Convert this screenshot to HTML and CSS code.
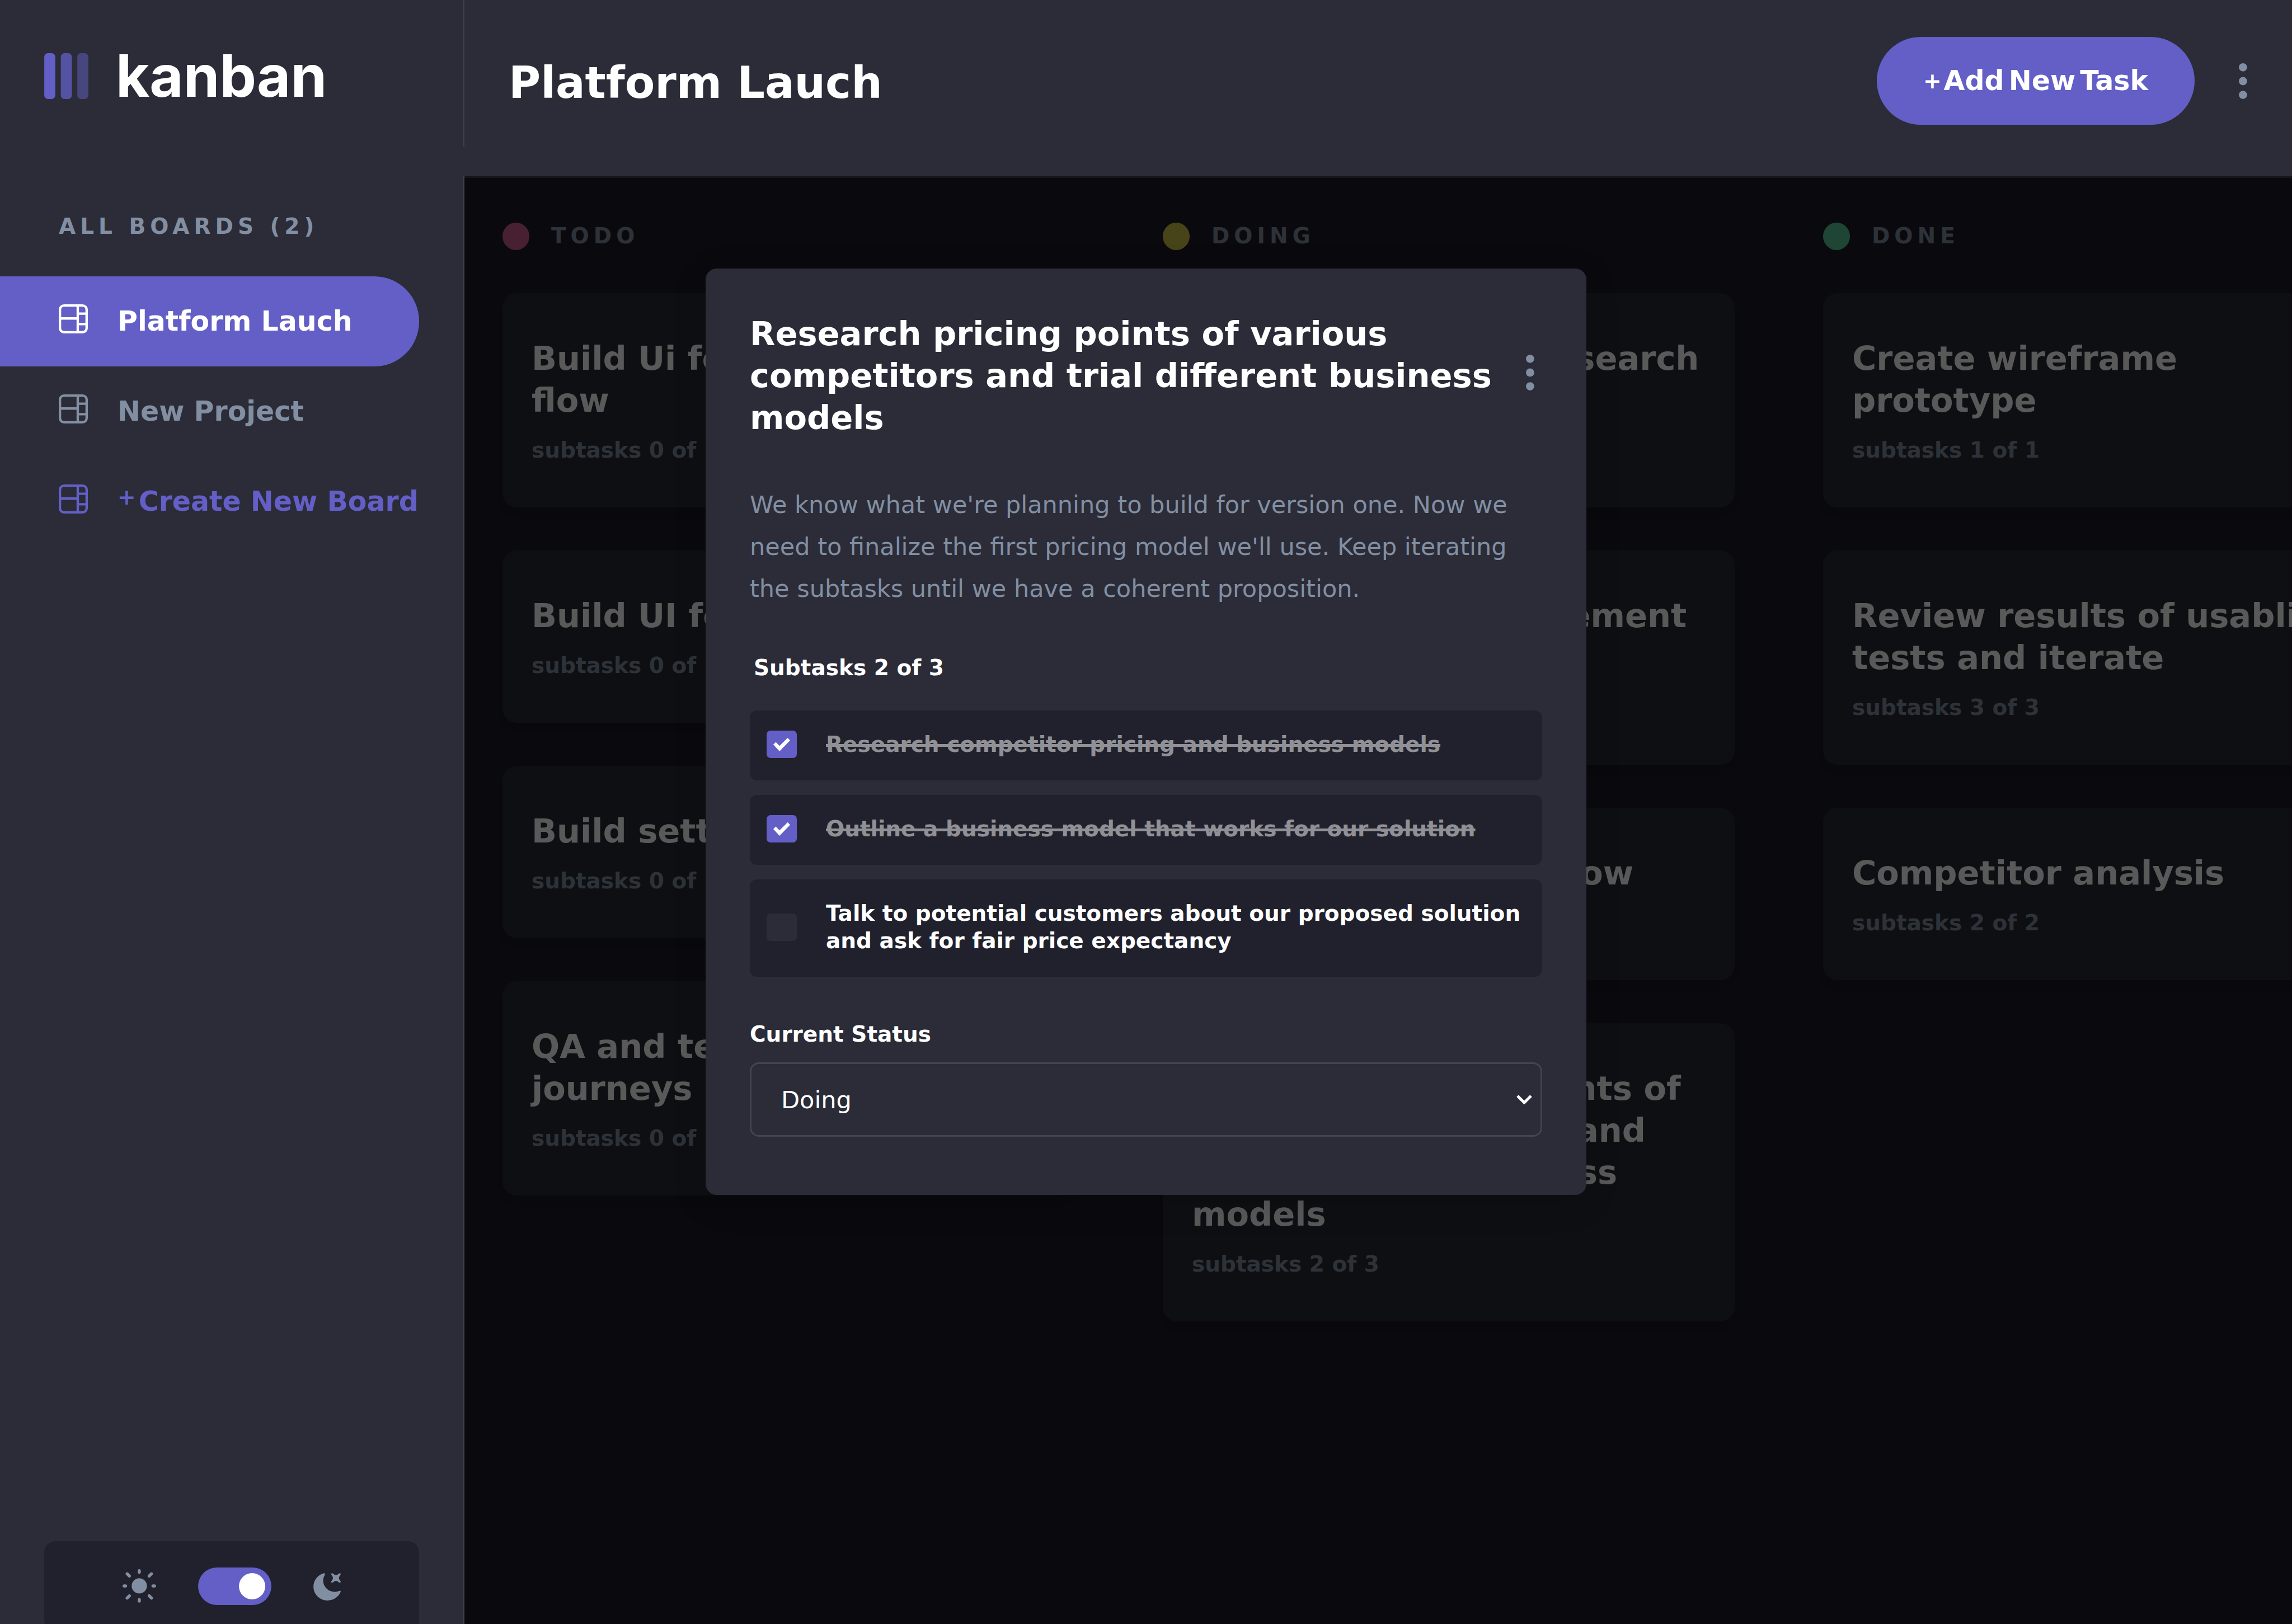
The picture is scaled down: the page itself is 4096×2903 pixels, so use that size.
FILE: index.html
```
<!DOCTYPE html>
<html lang="en">
<head>
<meta charset="utf-8">
<title>Kanban</title>
<link rel="stylesheet" href="styles.css">
</head>
<body>
<svg class="sprite" aria-hidden="true">
  <symbol id="board" viewBox="0 0 16 16"><path d="M0 2.889A2.889 2.889 0 0 1 2.889 0H13.11A2.889 2.889 0 0 1 16 2.889V13.11A2.888 2.888 0 0 1 13.111 16H2.89A2.889 2.889 0 0 1 0 13.111V2.89Zm1.333 5.555v4.667c0 .859.697 1.556 1.556 1.556h6.889V8.444H1.333Zm8.445-1.333V1.333h-6.89A1.556 1.556 0 0 0 1.334 2.89V7.11h8.445Zm4.889-1.333H11.11v4.444h3.556V5.778Zm0 5.778H11.11v3.11h2a1.556 1.556 0 0 0 1.556-1.555v-1.555Zm0-7.112V2.89a1.555 1.555 0 0 0-1.556-1.556h-2v3.111h3.556Z"/></symbol>
  <symbol id="dots" viewBox="0 0 5 20"><circle cx="2.308" cy="2.308" r="2.308"/><circle cx="2.308" cy="10" r="2.308"/><circle cx="2.308" cy="17.692" r="2.308"/></symbol>
  <symbol id="tick" viewBox="0 0 108 86"><path d="M0 43 16 27 40 51 92 0 108 16 40 86Z"/></symbol>
</svg>
<div class="app">
  <aside class="sidebar">
    <a class="logo" href="#">
      <svg class="logo-mark" viewBox="0 0 24 25" aria-hidden="true"><rect width="6" height="25" rx="2"/><rect opacity=".75" x="9" width="6" height="25" rx="2"/><rect opacity=".5" x="18" width="6" height="25" rx="2"/></svg>
      <span class="logo-text">kanban</span>
    </a>
    <h2 class="boards-title">ALL BOARDS (2)</h2>
    <nav class="boards">
      <a class="board-link active" href="#"><svg class="board-icon"><use href="#board"/></svg><span>Platform Lauch</span></a>
      <a class="board-link" href="#"><svg class="board-icon"><use href="#board"/></svg><span>New Project</span></a>
      <button class="board-link create" type="button"><svg class="board-icon"><use href="#board"/></svg><span class="plus">+</span><span>Create New Board</span></button>
    </nav>
    <div class="theme">
      <svg class="sun" viewBox="0 0 19 19" aria-hidden="true"><path d="M9.167 15.833a.833.833 0 0 1 .833.834v.833a.833.833 0 0 1-1.667 0v-.833a.833.833 0 0 1 .834-.834ZM3.75 13.75a.833.833 0 0 1 .59 1.422l-1.25 1.25a.833.833 0 0 1-1.18-1.178l1.25-1.25a.833.833 0 0 1 .59-.244Zm10.833 0c.221 0 .433.088.59.244l1.25 1.25a.833.833 0 0 1-1.179 1.178l-1.25-1.25a.833.833 0 0 1 .59-1.422ZM9.167 5a4.167 4.167 0 1 1 0 8.334 4.167 4.167 0 0 1 0-8.334Zm-7.5 3.333a.833.833 0 0 1 0 1.667H.833a.833.833 0 1 1 0-1.667h.834Zm15.833 0a.833.833 0 0 1 0 1.667h-.833a.833.833 0 0 1 0-1.667h.833Zm-1.667-6.666a.833.833 0 0 1 .59 1.422l-1.25 1.25a.833.833 0 1 1-1.179-1.178l1.25-1.25a.833.833 0 0 1 .59-.244Zm-13.333 0c.221 0 .433.088.59.244l1.25 1.25a.833.833 0 0 1-1.18 1.178L1.91 3.09a.833.833 0 0 1 .59-1.422ZM9.167 0A.833.833 0 0 1 10 .833v.834a.833.833 0 1 1-1.667 0V.833A.833.833 0 0 1 9.167 0Z"/></svg>
      <input class="switch" type="checkbox" role="switch" aria-label="Dark theme" checked>
      <svg class="moon" viewBox="0 0 16 16" aria-hidden="true"><path d="M6.474.682c.434-.11.718.406.481.78A6.067 6.067 0 0 0 6.01 4.72c0 3.418 2.827 6.187 6.314 6.187.89.002 1.77-.182 2.584-.54.408-.18.894.165.724.57-1.16 2.775-3.944 4.73-7.194 4.73-4.292 0-7.771-3.41-7.771-7.615 0-3.541 2.466-6.518 5.807-7.37Zm8.433.07c.442-.294.969.232.674.674l-.525.787a1.943 1.943 0 0 0 0 2.157l.525.788c.295.441-.232.968-.674.673l-.787-.525a1.943 1.943 0 0 0-2.157 0l-.786.525c-.442.295-.97-.232-.675-.673l.525-.788a1.943 1.943 0 0 0 0-2.157l-.525-.787c-.295-.442.232-.968.674-.673l.787.525a1.943 1.943 0 0 0 2.157 0Z"/></svg>
    </div>
  </aside>

  <div class="content">
    <header class="header">
      <h1 class="page-title">Platform Lauch</h1>
      <button class="add-task" type="button"><span class="plus">+</span><span class="add-label"><span>Add</span> <span>New</span> <span>Task</span></span></button>
      <button class="more" type="button" aria-label="Board menu"><svg class="dots"><use href="#dots"/></svg></button>
    </header>
    <main class="board">
      <section class="column">
        <h2 class="column-title"><span class="dot todo"></span>TODO</h2>
        <article class="card"><h3>Build Ui for onboarding flow</h3><p>subtasks 0 of 1</p></article>
        <article class="card"><h3>Build UI for search</h3><p>subtasks 0 of 1</p></article>
        <article class="card"><h3>Build settings UI</h3><p>subtasks 0 of 1</p></article>
        <article class="card"><h3>QA and test all major user journeys</h3><p>subtasks 0 of 1</p></article>
      </section>
      <section class="column">
        <h2 class="column-title"><span class="dot doing"></span>DOING</h2>
        <article class="card"><h3>Design settings and search pages</h3><p>subtasks 1 of 3</p></article>
        <article class="card"><h3>ADD account management endpoints</h3><p>subtasks 2 of 3</p></article>
        <article class="card"><h3>Design onboarding flow</h3><p>subtasks 1 of 3</p></article>
        <article class="card"><h3>Research pricing points of various competitors and trial different business models</h3><p>subtasks 2 of 3</p></article>
      </section>
      <section class="column">
        <h2 class="column-title"><span class="dot done"></span>DONE</h2>
        <article class="card"><h3>Create wireframe prototype</h3><p>subtasks 1 of 1</p></article>
        <article class="card"><h3>Review results of usablity tests and iterate</h3><p>subtasks 3 of 3</p></article>
        <article class="card"><h3>Competitor analysis</h3><p>subtasks 2 of 2</p></article>
      </section>
      <div class="shade"></div>
    </main>
  </div>
</div>

<div class="modal-layer">
  <form class="modal" role="dialog" aria-labelledby="task-title">
    <div class="modal-head">
      <h2 class="task-title" id="task-title">Research pricing points of various competitors and trial different business models</h2>
      <button class="more" type="button" aria-label="Task menu"><svg class="dots"><use href="#dots"/></svg></button>
    </div>
    <p class="description">We know what we're planning to build for version one. Now we need to finalize the first pricing model we'll use. Keep iterating the subtasks until we have a coherent proposition.</p>
    <h3 class="subtasks-title">Subtasks 2 of 3</h3>
    <div class="subtasks">
      <label class="subtask"><span class="check"><input type="checkbox" checked><svg><use href="#tick"/></svg></span><span class="subtask-text">Research competitor pricing and business models</span></label>
      <label class="subtask"><span class="check"><input type="checkbox" checked><svg><use href="#tick"/></svg></span><span class="subtask-text">Outline a business model that works for our solution</span></label>
      <label class="subtask"><span class="check"><input type="checkbox"></span><span class="subtask-text">Talk to potential customers about our proposed solution and ask for fair price expectancy</span></label>
    </div>
    <label class="status-label" for="status">Current Status</label>
    <div class="status">
      <select id="status"><option>Todo</option><option selected>Doing</option><option>Done</option></select>
      <svg class="chevron" viewBox="0 0 28 17" aria-hidden="true"><path d="M2 2 14 14 26 2"/></svg>
    </div>
  </form>
</div>
</body>
</html>
```
FILE: styles.css
```
:root {
  --panel: #2b2c37;
  --deep: #20212c;
  --muted: #828fa3;
  --purple: #635fc7;
  --line: #3e3f4e;
}

* { box-sizing: border-box; }

body, h1, h2, h3, p { margin: 0; }

body {
  background: var(--panel);
  color: #fff;
  font-family: "DejaVu Sans", sans-serif;
  font-size: 39px;
  font-weight: 700;
  line-height: 46px;
}

button {
  padding: 0;
  border: 0;
  background: none;
  color: inherit;
  font: inherit;
  cursor: pointer;
}

a { color: inherit; text-decoration: none; }

svg { display: block; flex: none; }

.sprite { display: none; }

.app { display: flex; height: 100vh; overflow: hidden; }

/* Sidebar: the divider breaks between the header and the board */
.sidebar {
  display: flex;
  flex: none;
  flex-direction: column;
  width: 830px;
  background: linear-gradient(var(--line) 262px, transparent 262px 315px, var(--line) 315px) right / 3px 100% no-repeat;
  overflow: hidden;
}

.logo { display: flex; gap: 49px; height: 382px; padding: 95px 79px 0; }
.logo-mark { width: 79px; height: 82px; fill: var(--purple); }
.logo-text { font: 700 104px/80px Inter, sans-serif; }

.boards-title {
  padding-left: 105px;
  color: var(--muted);
  font-size: 39px;
  letter-spacing: 8px;
}

.boards { display: flex; flex-direction: column; align-items: flex-start; padding-top: 66px; }

.board-link {
  display: flex;
  align-items: center;
  width: 749px;
  height: 161px;
  padding-left: 105px;
  border-radius: 0 80px 80px 0;
  color: var(--muted);
  font-size: 49px;
  line-height: 57px;
  white-space: nowrap;
}
.board-link.active { background: var(--purple); color: #fff; }
.board-link.create { color: var(--purple); }
.board-icon { width: 52px; height: 52px; margin: 0 53px 10px 0; fill: currentColor; }

.plus { font-size: 39px; line-height: 46px; }
.create .plus { margin: 0 5px 16px 0; }

.theme {
  display: flex;
  align-items: center;
  justify-content: center;
  gap: 73px;
  flex: none;
  width: 670px;
  height: 161px;
  margin: auto 0 -13px 79px;
  border-radius: 20px;
  background: var(--deep);
  fill: var(--muted);
}
.sun { width: 62px; height: 62px; }
.moon { width: 52px; height: 52px; }

.switch {
  display: flex;
  align-items: center;
  justify-content: flex-end;
  appearance: none;
  width: 131px;
  height: 67px;
  margin: 0;
  padding: 0 11px;
  border-radius: 34px;
  background: var(--purple);
}
.switch::before {
  content: "";
  width: 47px;
  height: 47px;
  border-radius: 50%;
  background: #fff;
}

/* Header */
.content { display: flex; flex: 1; flex-direction: column; min-width: 0; }

.header {
  display: flex;
  align-items: center;
  flex: none;
  height: 315px;
  padding: 0 79px 26px;
}
.page-title { flex: 1; font-size: 78px; line-height: 92px; padding-top: 6px; }

.add-task {
  display: flex;
  align-items: center;
  justify-content: center;
  gap: 4px;
  width: 568px;
  height: 157px;
  margin-right: 79px;
  border-radius: 79px;
  background: var(--purple);
}
.add-label { display: flex; gap: 8px; font-size: 49px; line-height: 57px; }

.dots { width: 16px; height: 66px; fill: var(--muted); }

/* Board */
.board {
  position: relative;
  display: flex;
  flex: 1;
  gap: 158px;
  padding: 82px 68px;
  background: #1e1e29;
  box-shadow: inset 0 3px var(--line);
  overflow: hidden;
}
.shade {
  position: absolute;
  inset: 0;
  background: rgba(0, 0, 0, .65);
}
.column { display: flex; flex: none; flex-direction: column; gap: 77px; width: 1022px; }
.column-title {
  display: flex;
  align-items: center;
  gap: 39px;
  height: 50px;
  color: var(--muted);
  font-size: 39px;
  letter-spacing: 8px;
}
.dot { width: 48px; height: 49px; border-radius: 50%; }
.dot.todo { background: #cb5d8c; }
.dot.doing { background: #c8c345; }
.dot.done { background: #5bc895; }

.card {
  padding: 79px 52px;
  border-radius: 26px;
  background: #292c34;
  box-shadow: 0 13px 20px rgba(0, 0, 0, .15);
}
.card h3 { margin-bottom: 29px; font-size: 59px; line-height: 75px; }
.card p { color: var(--muted); }

/* Task dialog */
.modal-layer {
  position: absolute;
  inset: 0;
  display: flex;
  align-items: flex-start;
  justify-content: center;
  padding-top: 480px;
}
.modal {
  width: 1574px;
  padding: 79px 79px 104px;
  border-radius: 20px;
  background: var(--panel);
  box-shadow: 0 13px 60px rgba(0, 0, 0, .15);
}
.modal-head { display: flex; align-items: center; justify-content: space-between; padding-right: 13px; }
.modal-head .more { margin-bottom: 12px; }
.task-title { font-size: 59px; line-height: 75px; }
.description {
  padding-top: 81px;
  color: var(--muted);
  font-size: 43px;
  font-weight: 400;
  line-height: 75px;
}
.subtasks-title { padding: 81px 0 53px 7px; font-size: 39px; }
.subtasks { display: flex; flex-direction: column; gap: 26px; }
.subtask {
  display: flex;
  align-items: center;
  gap: 52px;
  padding: 36px 26px 40px 30px;
  border-radius: 13px;
  background: var(--deep);
  line-height: 49px;
}
.check { display: grid; flex: none; place-items: center; }
.check > * { grid-area: 1 / 1; }
.check input {
  appearance: none;
  width: 54px;
  height: 49px;
  margin: 0;
  border-radius: 7px;
  background: var(--panel);
}
.check input:checked { background: var(--purple); }
.check svg { width: 30px; height: 24px; fill: #fff; pointer-events: none; }
.check:has(:checked) + .subtask-text { opacity: .5; text-decoration: line-through 5px; }

.status-label { display: block; padding: 80px 0 27px; }
.status { display: grid; align-items: center; }
.status > * { grid-area: 1 / 1; }
.status select {
  appearance: none;
  width: 100%;
  height: 133px;
  padding: 0 53px;
  border: 3px solid rgba(130, 143, 163, .25);
  border-radius: 16px;
  background: none;
  color: #fff;
  font: 400 43px "DejaVu Sans", sans-serif;
}
.chevron {
  justify-self: end;
  width: 28px;
  height: 17px;
  margin-right: 18px;
  fill: none;
  stroke: #fff;
  stroke-width: 5;
  pointer-events: none;
}
```
